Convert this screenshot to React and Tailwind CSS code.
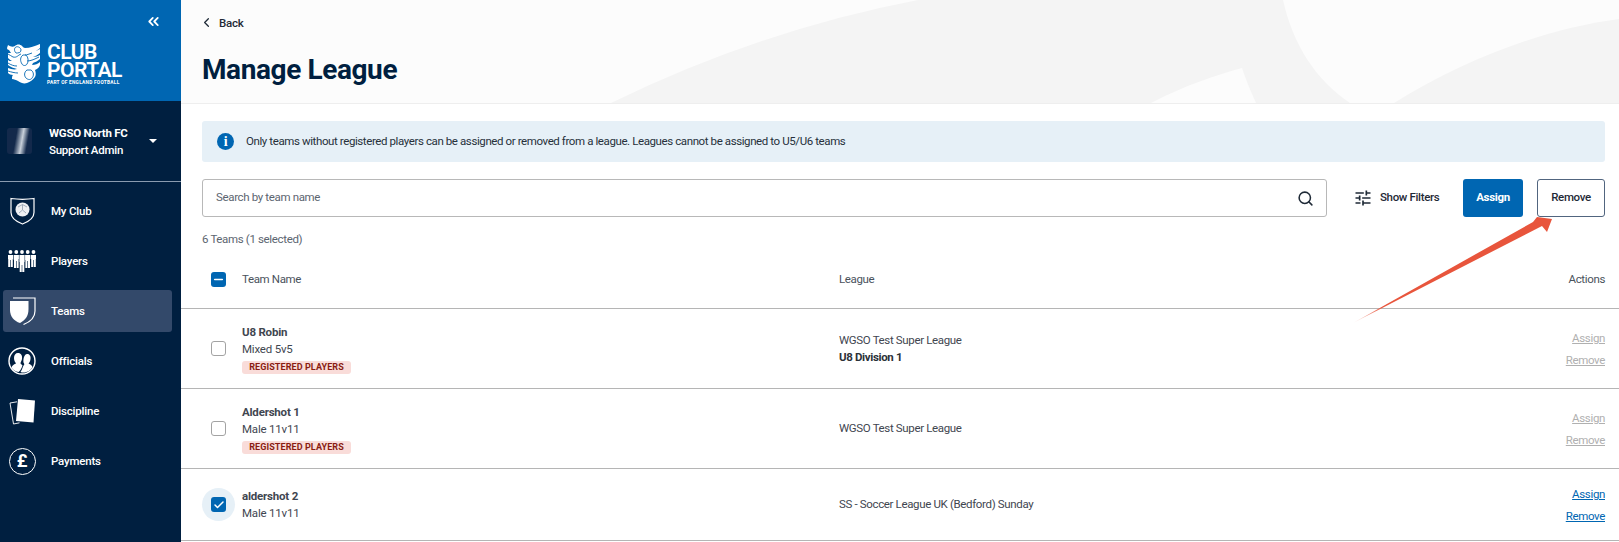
import React from "react";
import { ChevronLeft, ChevronsLeft, Search, Check, Minus } from "lucide-react";
import { MdTune } from "react-icons/md";

function ShieldBall() {
  return (
    <svg width="25" height="28" viewBox="0 0 25 28">
      <path d="M1 1.500c7 1 16 1 23 0v14c0 5.500-5 9-11.500 11.500C6 24.500 1 21 1 15.500z" fill="none" stroke="#fff" strokeWidth="1.200" />
      <circle cx="12.500" cy="12.500" r="7" fill="#eef0f3" />
      <path d="M8 10l4.500-2.500L17 10M9 16l3.500-3 3.500 3M12.500 7.500v5.500" stroke="#9aa6b4" strokeWidth="0.900" fill="none" />
    </svg>
  );
}
function PlayersIcon() {
  const xs = [2.500, 8.300, 14, 19.700, 25.500];
  return (
    <svg width="28" height="22" viewBox="0 0 28 22">
      {xs.map((x, i) => (
        <g key={x} fill="#fff">
          <circle cx={x} cy="2" r="1.900" />
          <path d={`M${x - 2.600} 5h5.200v${i === 2 ? 7 : 4}h-.300v${i === 2 ? 10 : i === 0 || i === 4 ? 8 : 9}h-2v-7h-.600v7h-2v-${i === 2 ? 10 : 8}h-.300z`} />
        </g>
      ))}
    </svg>
  );
}
function TeamShield() {
  return (
    <svg width="27" height="28" viewBox="0 0 27 28">
      <path d="M1 4h18.500v8c0 7-3 11-8.500 14C5 24 1 19.500 1 13z" fill="#fff" />
      <path d="M4 1h22v13c0 6.500-5 11-11.500 13.500" fill="none" stroke="#fff" strokeWidth="1.200" />
    </svg>
  );
}
function OfficialsIcon() {
  return (
    <svg width="28" height="28" viewBox="0 0 28 28">
      <circle cx="14" cy="14" r="13" fill="none" stroke="#fff" strokeWidth="1.400" />
      <path d="M10 6c3 0 4.500 2.500 4 6-.3 2-1.500 3-1.500 4.500l2 2c-1 3-2 5-4 6.500-3-.5-5.500-2-7-4.500.5-2 2-3 4.500-4-1-1.500-2-3-2-5.500C6 8 7.500 6 10 6z" fill="#fff" />
      <path d="M19 7c2.500 0 4 2 3.500 5-.2 2-1 3.500-2 4.500 2 .8 3.500 2 4 3.500-1.500 3-5 5.500-9 5.500-1 0-2 0-3-.5 1-1.500 2-4 3-6.500 1-.8 1-1.500 0-3-.5-4 1-8.500 3.500-8.500z" fill="#fff" />
    </svg>
  );
}
function DisciplineIcon() {
  return (
    <svg width="27" height="27" viewBox="0 0 27 27">
      <path d="M1 5l7-1.200M1 5l3.500 21 6-1.200" fill="none" stroke="#fff" strokeWidth="0.900" />
      <path d="M9 1l17 1.500-1.500 22L7 23z" fill="#fff" />
    </svg>
  );
}
function PoundIcon() {
  return (
    <span className="flex h-[27px] w-[27px] items-center justify-center rounded-full border-[1.5px] border-white text-[18px] leading-none font-bold text-white">
      £
    </span>
  );
}

function Lions() {
  return (
    <svg width="34" height="41" viewBox="0 0 34 41">
      <path fill="#fff" d="M1 2c3 2 5 2 7 1 2-2 5-2 7 0 1 1 2 2 3 2 5 0 10-2 15-4v4c-2 2-4 3-6 3 2 0 4-1 6-2v4c-2 2-5 3-7 4 2 0 5-1 7-2v4c-2 2-5 3-7 4l-1 2c3 0 6-1 8-3v3c-1 3-3 4-5 5 1 3 1 5 0 7-2 3-5 5-8 6-3 1-6 0-9-2-2-1-4-2-6-2 0-2 0-3 1-4-2 0-4-1-5-2v-5c3 1 6 2 9 1-3-1-7-2-9-4v-5c1 1 2 1 4 1-2-1-3-2-4-3v-5l3 0-2-3c-1 0-2-1-2-2z" />
      <g fill="none" stroke="#0066b2" strokeWidth="0.900">
        <path d="M1 11c2 1 3 2 5 3 4 1 5-2 8-3M1 20c3 2 6 3 9 3M20 18c4 0 8-2 12-4M1 28c3 1 7 2 10 2M25 10c-3 1-5 2-7 2" />
        <path d="M9 4c-2 1-2 4 0 6 2 0 5 0 5-3 0-2-3-4-5-3z" />
        <path d="M16 12c-3 2-3 6-1 9 1 2 4 2 5 0 2-3 1-7-1-9z" />
        <path d="M20 27c-3 2-3 6-1 8 2 2 5 2 6 0 2-2 2-6-1-8z" />
      </g>
    </svg>
  );
}

function Logo() {
  return (
    <div className="flex items-start gap-[6px] pl-[7px]">
      <Lions />
      <div className="flex flex-col text-white">
        <span className="text-[21px] leading-[18px] font-semibold tracking-[-0.5px]">CLUB</span>
        <span className="text-[21px] leading-[18px] font-semibold tracking-[-0.5px]">PORTAL</span>
        <span className="mt-[1px] text-[4.800px] leading-[5px] font-bold tracking-[0.25px] whitespace-nowrap">PART OF ENGLAND FOOTBALL</span>
      </div>
    </div>
  );
}

const NAV = [
  ["My Club", ShieldBall],
  ["Players", PlayersIcon],
  ["Teams", TeamShield],
  ["Officials", OfficialsIcon],
  ["Discipline", DisciplineIcon],
  ["Payments", PoundIcon],
];

function Sidebar() {
  return (
    <aside className="flex h-full w-[181px] shrink-0 flex-col bg-[#001f40] text-white">
      <div className="flex h-[101px] flex-col bg-[#0066b2]">
        <div className="flex justify-end pt-[13px] pr-[19px]">
          <ChevronsLeft size={17} strokeWidth={2.500} />
        </div>
        <div className="mt-[13px]"><Logo /></div>
      </div>
      <div className="flex h-[81px] items-center border-b border-[#8a9bb0] pl-[7px] pr-[24px]">
        <div className="h-[26px] w-[25px] rounded-[3px] bg-[linear-gradient(100deg,#13294b_35%,#c8d0da_58%,#13294b_78%)]" />
        <div className="ml-[17px] flex flex-col pt-[1px] text-[11.500px] leading-[17px] font-medium tracking-[-0.25px] whitespace-nowrap">
          <span className="font-bold">WGSO North FC</span>
          <span>Support Admin</span>
        </div>
        <span className="ml-auto h-0 w-0 border-x-[4px] border-t-[4px] border-x-transparent border-t-white" />
      </div>
      <nav className="flex flex-col gap-[8px] pt-[8px] pl-[3px] pr-[9px]">
        {NAV.map(([label, Icon]) => (
          <div
            key={label}
            className={`flex h-[42px] items-center rounded-[3px] text-[11.500px] font-medium tracking-[-0.2px] ${label === "Teams" ? "bg-[#33496a]" : ""}`}
          >
            <span className="flex w-[42px] shrink-0 justify-center -ml-[2px] mr-[2px]"><Icon /></span>
            <span className="ml-[6px] pt-[2px]">{label}</span>
          </div>
        ))}
      </nav>
    </aside>
  );
}

function Box({ state }) {
  if (state === "checked") {
    return (
      <span className="relative flex h-[15px] w-[15px] items-center justify-center rounded-[3px] bg-[#0066b2]">
        <span className="absolute -inset-[9px] rounded-full bg-[#e6f0f7]" />
        <span className="relative flex h-[15px] w-[15px] items-center justify-center rounded-[3px] bg-[#0066b2]">
          <Check size={12} strokeWidth={3} className="text-white" />
        </span>
      </span>
    );
  }
  if (state === "some") {
    return (
      <span className="flex h-[15px] w-[15px] items-center justify-center rounded-[3px] bg-[#0066b2]">
        <Minus size={13} strokeWidth={3} className="text-white" />
      </span>
    );
  }
  return <span className="h-[15px] w-[15px] rounded-[3px] border-[1.5px] border-[#a3a3a3] bg-white" />;
}

function Badge() {
  return (
    <span className="mt-[3px] flex h-[13px] w-[109px] items-center justify-center rounded-[3px] bg-[#f9dcd9] text-[9px] leading-none font-bold tracking-[0.1px] text-[#8a1c12] whitespace-nowrap">
      REGISTERED PLAYERS
    </span>
  );
}

function Row({ name, type, badge, league, division, box, active, height }) {
  return (
    <div className={`flex items-center border-b border-[#b5b5b5] pr-[14px] ${height}`}>
      <div className="flex w-[61px] shrink-0 justify-end pr-[16px]"><Box state={box} /></div>
      <div className="flex w-[597px] shrink-0 flex-col text-[11.500px] leading-[17px] tracking-[-0.2px] text-[#3f4650]">
        <span className="font-bold">{name}</span>
        <span>{type}</span>
        {badge && <Badge />}
      </div>
      <div className="flex flex-col text-[11.500px] leading-[17px] tracking-[-0.35px] text-[#3f4650]">
        <span>{league}</span>
        {division && <span className="font-bold text-[#2b3138]">{division}</span>}
      </div>
      <div className={`ml-auto flex flex-col items-end gap-[6px] text-[11.500px] leading-[16px] tracking-[-0.35px] underline ${active ? "text-[#0066b2]" : "text-[#b0b0b0]"}`}>
        <span>Assign</span>
        <span>Remove</span>
      </div>
    </div>
  );
}

function Main() {
  return (
    <main className="relative flex h-full min-w-0 flex-1 flex-col overflow-hidden bg-white">
      <header className="relative h-[104px] shrink-0 overflow-hidden border-b border-[#eeeeee] bg-[#fcfcfc] pl-[21px]">
        <svg className="absolute left-0 top-0 h-[103px] w-[1438px]" viewBox="0 0 1438 103">
          <path d="M430 103Q580 30 737 0H1102C1112 45 1135 80 1169 103z" fill="#f4f4f4" />
          <path d="M970 103C1005 85 1035 75 1061 68 1065 80 1070 92 1075 103z" fill="#fcfcfc" />
          <path d="M1213 103C1290 55 1370 28 1438 19V103z" fill="#f4f4f4" />
        </svg>
        <div className="relative flex items-center gap-[5px] pt-[15px] text-[11.500px] leading-[14px] font-medium tracking-[-0.2px] text-[#1f2a37]">
          <ChevronLeft size={15} strokeWidth={2} className="-ml-[3px]" />
          <span>Back</span>
        </div>
        <h1 className="relative mt-[22px] text-[28px] leading-[36px] font-bold tracking-[-0.4px] text-[#001f40]">Manage League</h1>
      </header>

      <div className="pl-[21px] pr-[14px] pt-[17px]">
        <div className="flex h-[41px] items-center rounded-[3px] bg-[#e6f0f7] pl-[15px] text-[11.500px] tracking-[-0.4px] text-[#27303b]">
          <span className="flex h-[17px] w-[17px] shrink-0 items-center justify-center rounded-full bg-[#0066b2] text-[14px] leading-none font-bold text-white font-['Liberation_Serif',serif]">i</span>
          <span className="ml-[12px]">Only teams without registered players can be assigned or removed from a league. Leagues cannot be assigned to U5/U6 teams</span>
        </div>

        <div className="mt-[17px] flex items-center text-[11.500px] tracking-[-0.35px]">
          <div className="flex h-[38px] w-[1125px] shrink-0 items-center justify-between rounded-[3px] border border-[#b8b8b8] pl-[13px] pr-[12px] text-[#5c6570]">
            <span>Search by team name</span>
            <Search size={17} strokeWidth={2.200} className="text-[#1f2a37]" />
          </div>
          <div className="ml-[26px] flex items-center gap-[7px] font-medium text-[#1f2a37] whitespace-nowrap">
            <MdTune size={20} />
            <span>Show Filters</span>
          </div>
          <button className="ml-auto h-[38px] w-[60px] shrink-0 rounded-[3px] bg-[#0066b2] font-bold text-white">Assign</button>
          <button className="ml-[14px] h-[38px] w-[68px] shrink-0 rounded-[3px] border border-[#51657f] bg-white font-medium text-[#1f2a37]">Remove</button>
        </div>

        <div className="mt-[14px] text-[11.500px] leading-[16px] tracking-[-0.35px] text-[#5c6570]">6 Teams (1 selected)</div>
      </div>

      <div className="mt-[4px] flex h-[58px] shrink-0 items-center border-b border-[#b5b5b5] pr-[14px] text-[11.500px] tracking-[-0.35px] text-[#4a525c]">
        <div className="flex w-[61px] shrink-0 justify-end pr-[16px] pb-[1px]"><Box state="some" /></div>
        <span className="w-[597px] shrink-0">Team Name</span>
        <span>League</span>
        <span className="ml-auto">Actions</span>
      </div>
      <div className="flex flex-col">
        <Row height="h-[80px]" name="U8 Robin" type="Mixed 5v5" badge league="WGSO Test Super League" division="U8 Division 1" />
        <Row height="h-[80px]" name="Aldershot 1" type="Male 11v11" badge league="WGSO Test Super League" />
        <Row height="h-[72px]" name="aldershot 2" type="Male 11v11" league="SS - Soccer League UK (Bedford) Sunday" box="checked" active />
      </div>

      <svg className="pointer-events-none absolute left-0 top-0 h-[542px] w-[1438px]" viewBox="0 0 1438 542">
        <defs>
          <linearGradient id="arrowFade" x1="1172" y1="323" x2="1367" y2="217" gradientUnits="userSpaceOnUse">
            <stop offset="0" stopColor="#e8553c" stopOpacity="0.1" />
            <stop offset="0.15" stopColor="#e8553c" />
            <stop offset="1" stopColor="#e8553c" />
          </linearGradient>
        </defs>
        <path d="M1172 323L1352 222 1356 217 1371 219 1366 232 1361 226z" fill="url(#arrowFade)" />
      </svg>
    </main>
  );
}

export default function App() {
  return (
    <div className="flex h-[542px] w-[1619px] overflow-hidden font-['Roboto',sans-serif]">
      <Sidebar />
      <Main />
    </div>
  );
}
